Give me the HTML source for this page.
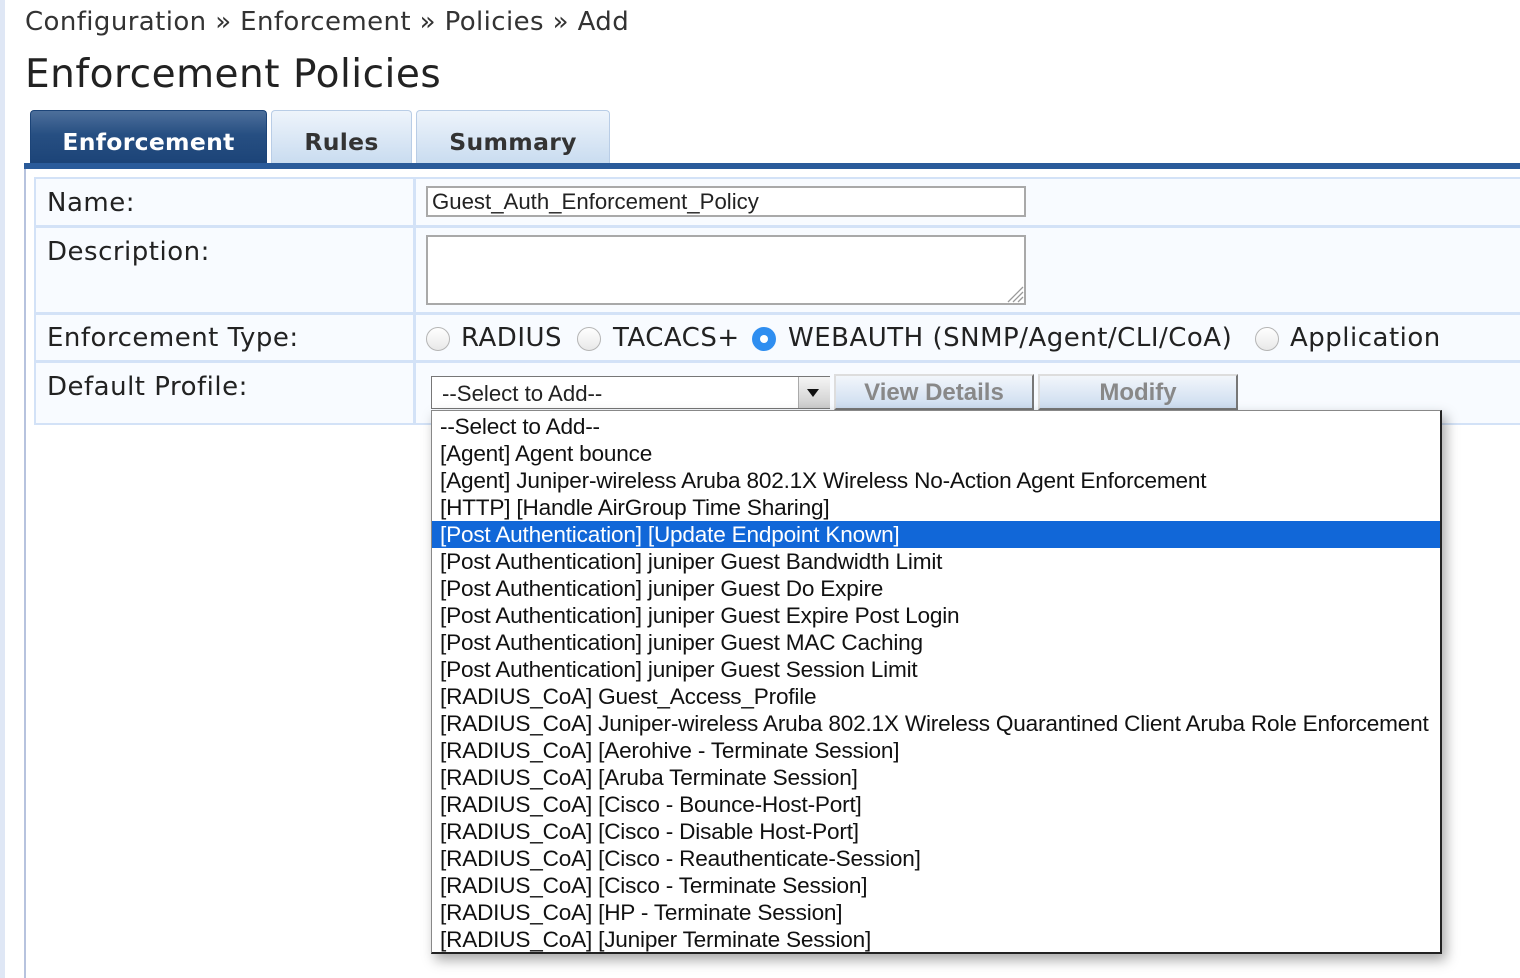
<!DOCTYPE html>
<html><head><style>
body{margin:0;width:1520px;height:978px;background:#fff;position:relative;overflow:hidden;font-family:"DejaVu Sans",sans-serif;color:#222}
.a{position:absolute}
.strip{left:0;top:0;width:5px;height:978px;background:#dfe7f5}
.bc{left:25px;top:7px;font-size:26px;letter-spacing:0.4px;color:#333;white-space:nowrap}
.title{left:25px;top:52px;font-size:39px;letter-spacing:0.5px;color:#222;white-space:nowrap}
.tab{top:110px;height:53px;border:1px solid #b9cde6;border-bottom:none;border-radius:4px 4px 0 0;background:linear-gradient(#eef4fb,#c9dcf0);font-weight:bold;font-size:23.5px;letter-spacing:0.3px;color:#333;text-align:center;line-height:62px;box-sizing:border-box}
.tab.on{background:linear-gradient(#4d6f9b,#274f82 45%,#1c4478);color:#fff;border-color:#1c4478}
.bar{left:24px;top:163px;width:1496px;height:6px;background:#2a5b9a}
.box{left:24px;top:169px;width:1496px;height:809px;border-left:2px solid #b7c3de;background:#fff;box-sizing:border-box}
.cell{background:#f8fbff;border:2px solid #d3e2f7;box-sizing:border-box}
.lab{font-size:26px;letter-spacing:0.5px;color:#222;padding-left:11px;white-space:nowrap}
.inp{border:2px solid #a9a9a9;background:#fff;box-sizing:border-box;font-family:"Liberation Sans",sans-serif;font-size:22.2px;padding-left:4px}
.radio{width:24px;height:24px;border-radius:50%;border:1px solid #b5b5b5;background:linear-gradient(#fff,#e8e8e8);box-sizing:border-box}
.btn{top:374px;height:36px;border:2px solid #777;border-top-color:#ddd;border-left-color:#ddd;background:linear-gradient(#f2f6fb,#ccdcef);font-family:"Liberation Sans",sans-serif;font-weight:bold;font-size:24px;color:#888;text-align:center;line-height:34px;box-sizing:border-box}
.dd{left:431px;top:410px;width:1011px;height:544px;background:#fff;border:1px solid #888;border-right:2px solid #222;border-bottom:2px solid #222;box-shadow:4px 6px 12px rgba(0,0,0,.35);box-sizing:border-box;font-family:"Liberation Sans",sans-serif;font-size:22.6px;color:#111;padding-top:2px}
.dd div{height:27px;line-height:27px;padding-left:8px;white-space:nowrap;letter-spacing:-0.2px}
.dd .sel{background:#1167d8;color:#fff}
</style></head><body>
<div class="a strip"></div>
<div class="a bc">Configuration » Enforcement » Policies » Add</div>
<div class="a title">Enforcement Policies</div>
<div class="a tab on" style="left:30px;width:237px">Enforcement</div>
<div class="a tab" style="left:271px;width:141px">Rules</div>
<div class="a tab" style="left:416px;width:194px">Summary</div>
<div class="a bar"></div>
<div class="a box"></div>

<div class="a cell" style="left:34px;top:177px;width:381px;height:50px"></div>
<div class="a cell" style="left:414px;top:177px;width:1110px;height:50px"></div>
<div class="a lab" style="left:36px;top:188px">Name:</div>
<div class="a inp" style="left:426px;top:186px;width:600px;height:31px;line-height:28px">Guest_Auth_Enforcement_Policy</div>

<div class="a cell" style="left:34px;top:226px;width:381px;height:88px"></div>
<div class="a cell" style="left:414px;top:226px;width:1110px;height:88px"></div>
<div class="a lab" style="left:36px;top:237px">Description:</div>
<div class="a inp" style="left:426px;top:235px;width:600px;height:70px"></div>
<svg class="a" style="left:1006px;top:285px" width="18" height="18"><path d="M2 17L17 2M7 17L17 7M12 17L17 12" stroke="#999" stroke-width="1.3"/></svg>

<div class="a cell" style="left:34px;top:313px;width:381px;height:49px"></div>
<div class="a cell" style="left:414px;top:313px;width:1110px;height:49px"></div>
<div class="a lab" style="left:36px;top:323px">Enforcement Type:</div>
<div class="a radio" style="left:426px;top:327px"></div>
<div class="a lab" style="left:450px;top:323px;padding-left:11px">RADIUS</div>
<div class="a radio" style="left:577px;top:327px"></div>
<div class="a lab" style="left:602px;top:323px">TACACS+</div>
<div class="a radio" style="left:752px;top:327px;border:none;background:#2f8ef0"></div>
<div class="a" style="left:760px;top:335px;width:8px;height:8px;border-radius:50%;background:#fff"></div>
<div class="a lab" style="left:777px;top:323px">WEBAUTH (SNMP/Agent/CLI/CoA)</div>
<div class="a radio" style="left:1255px;top:327px"></div>
<div class="a lab" style="left:1279px;top:323px">Application</div>

<div class="a cell" style="left:34px;top:361px;width:381px;height:64px"></div>
<div class="a cell" style="left:414px;top:361px;width:1110px;height:64px"></div>
<div class="a lab" style="left:36px;top:372px">Default Profile:</div>
<div class="a inp" style="left:431px;top:376px;width:399px;height:33px;line-height:33px;border:1px solid #777;padding-left:10px">--Select to Add--</div>
<div class="a" style="left:798px;top:377px;width:31px;height:31px;background:linear-gradient(#f5f5f5,#ccc);border-left:1px solid #aaa"></div>
<svg class="a" style="left:806px;top:388px" width="14" height="10"><path d="M1 1H13L7 9Z" fill="#111"/></svg>
<div class="a btn" style="left:834px;width:200px">View Details</div>
<div class="a btn" style="left:1038px;width:200px">Modify</div>

<div class="a dd">
<div>--Select to Add--</div>
<div>[Agent] Agent bounce</div>
<div>[Agent] Juniper-wireless Aruba 802.1X Wireless No-Action Agent Enforcement</div>
<div>[HTTP] [Handle AirGroup Time Sharing]</div>
<div class="sel">[Post Authentication] [Update Endpoint Known]</div>
<div>[Post Authentication] juniper Guest Bandwidth Limit</div>
<div>[Post Authentication] juniper Guest Do Expire</div>
<div>[Post Authentication] juniper Guest Expire Post Login</div>
<div>[Post Authentication] juniper Guest MAC Caching</div>
<div>[Post Authentication] juniper Guest Session Limit</div>
<div>[RADIUS_CoA] Guest_Access_Profile</div>
<div>[RADIUS_CoA] Juniper-wireless Aruba 802.1X Wireless Quarantined Client Aruba Role Enforcement</div>
<div>[RADIUS_CoA] [Aerohive - Terminate Session]</div>
<div>[RADIUS_CoA] [Aruba Terminate Session]</div>
<div>[RADIUS_CoA] [Cisco - Bounce-Host-Port]</div>
<div>[RADIUS_CoA] [Cisco - Disable Host-Port]</div>
<div>[RADIUS_CoA] [Cisco - Reauthenticate-Session]</div>
<div>[RADIUS_CoA] [Cisco - Terminate Session]</div>
<div>[RADIUS_CoA] [HP - Terminate Session]</div>
<div>[RADIUS_CoA] [Juniper Terminate Session]</div>
</div>
</body></html>
